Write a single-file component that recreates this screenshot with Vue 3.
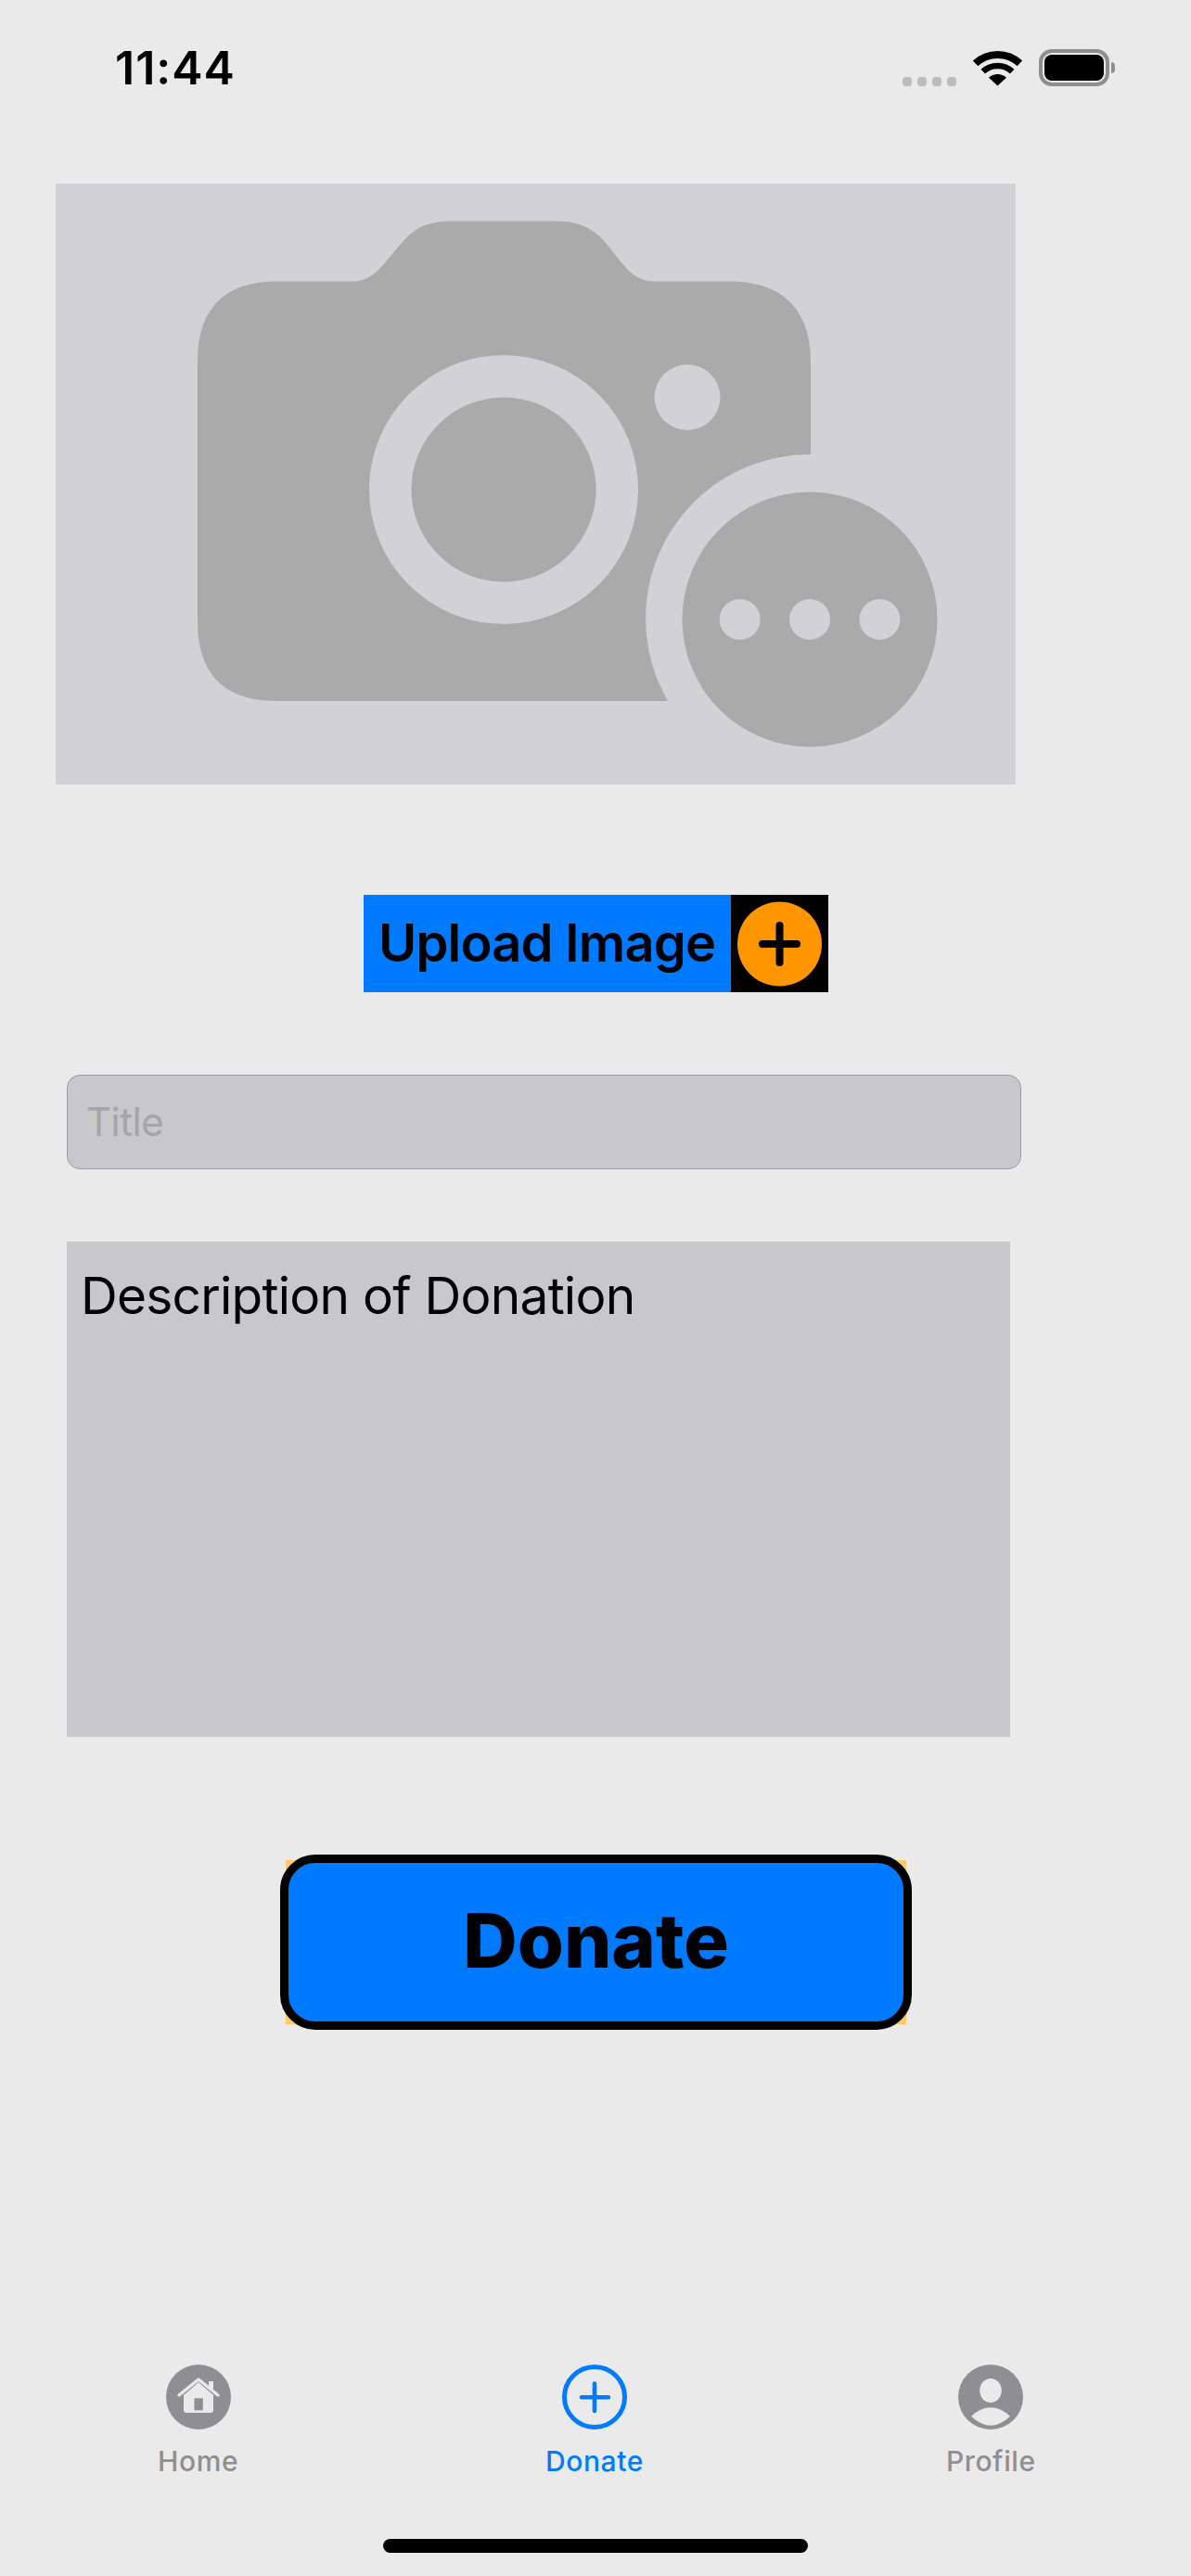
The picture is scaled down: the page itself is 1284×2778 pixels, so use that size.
<script setup>
const tabs = [
  { id: 'home', label: 'Home' },
  { id: 'donate', label: 'Donate', active: true },
  { id: 'profile', label: 'Profile' },
]
</script>

<template>
  <div class="page">
    <header class="status">
      <span class="time">11:44</span>
      <div class="status-icons">
        <div class="signal"><i></i><i></i><i></i><i></i></div>
        <svg class="wifi" viewBox="1048 52 54 40" width="54" height="40">
          <path d="M1051.6 67.4A35 35 0 0 1 1099.4 67.4" fill="none" stroke="#000" stroke-width="8" />
          <path d="M1059.8 76.2A23 23 0 0 1 1091.2 76.2" fill="none" stroke="#000" stroke-width="6.5" />
          <path d="M1075.5 91.5L1066 82.8A14 14 0 0 1 1085 82.8Z" fill="#000" />
        </svg>
        <div class="battery"><div class="battery-fill"></div></div>
        <div class="battery-nub"></div>
      </div>
    </header>

    <div class="photo">
      <svg viewBox="60 198 1035 648" width="1035" height="648">
        <path
          fill="#aaaaaa"
          d="M298 303.6H377C397 303.6 405 295 417 281L432 263C447 246 460 238.5 488 238.5H598C625 238.5 640 246 654 263L668 281C680 295 688 303.6 708 303.6H787C845 303.6 874 335 874 390V756H298C240 756 213 725 213 670V390C213 335 240 303.6 298 303.6Z"
        />
        <circle cx="873" cy="667" r="177" fill="#d1d1d6" />
        <circle cx="543" cy="528" r="145" fill="#d1d1d6" />
        <circle cx="543" cy="528" r="99.5" fill="#aaaaaa" />
        <circle cx="741" cy="428.5" r="35.5" fill="#d1d1d6" />
        <circle cx="873" cy="668" r="137.5" fill="#aaaaaa" />
        <circle cx="797.6" cy="668" r="22" fill="#d1d1d6" />
        <circle cx="873" cy="668" r="22" fill="#d1d1d6" />
        <circle cx="948.4" cy="668" r="22" fill="#d1d1d6" />
      </svg>
    </div>

    <div class="upload">
      <span class="upload-label">Upload Image</span>
      <div class="upload-icon">
        <svg viewBox="0 0 91 94" width="91" height="94">
          <circle cx="45.5" cy="47" r="45.5" fill="#ff9500" />
          <path d="M45.5 27V67M27 47H64" stroke="#000" stroke-width="8" stroke-linecap="round" />
        </svg>
      </div>
    </div>

    <div class="title-field">Title</div>
    <div class="description">Description of Donation</div>

    <div class="donate-wrap">
      <button class="donate" type="button">Donate</button>
    </div>

    <nav class="tabs">
      <div v-for="tab in tabs" :key="tab.id" class="tab" :class="{ active: tab.active }">
        <svg v-if="tab.id === 'home'" viewBox="0 0 70 70" width="70" height="70">
          <circle cx="35" cy="35" r="35" fill="#8e8e93" />
          <path d="M19 32H51V49Q51 52 48 52H22Q19 52 19 49Z" fill="#eaeaea" />
          <path d="M20 32L35 19L50 32Z" fill="#eaeaea" />
          <path d="M14 33L35 16L56 33" fill="none" stroke="#eaeaea" stroke-width="3.4" stroke-linecap="round" stroke-linejoin="round" />
          <path d="M46 18H51V28L46 24Z" fill="#eaeaea" />
          <rect x="30.5" y="36.3" width="9.3" height="13" fill="#8e8e93" />
        </svg>
        <svg v-else-if="tab.id === 'donate'" viewBox="0 0 70 70" width="70" height="70">
          <circle cx="35" cy="35" r="32.5" fill="none" stroke="#007aff" stroke-width="5" />
          <path d="M35 20.5V50M21 35.3H50" fill="none" stroke="#007aff" stroke-width="4.6" stroke-linecap="round" />
        </svg>
        <svg v-else viewBox="0 0 70 70" width="70" height="70">
          <circle cx="35" cy="35" r="35" fill="#8e8e93" />
          <ellipse cx="35" cy="28" rx="11.8" ry="13" fill="#eaeaea" />
          <path d="M14 55.7Q35 37 56 55.7Q35 75.7 14 55.7Z" fill="#eaeaea" />
        </svg>
        <span class="tab-label">{{ tab.label }}</span>
      </div>
    </nav>

    <div class="indicator-row"><div class="indicator"></div></div>
  </div>
</template>

<style>
html, body { margin: 0; background: #eaeaea; }
</style>

<style scoped>
.page {
  width: 1284px;
  height: 2778px;
  background: #eaeaea;
  display: flex;
  flex-direction: column;
  font-family: Inter, "Liberation Sans", sans-serif;
  overflow: hidden;
}
.status {
  height: 198px;
  flex: none;
  display: flex;
  justify-content: space-between;
  align-items: flex-start;
  box-sizing: border-box;
  padding: 43px 82px 0 124px;
}
.time {
  font-size: 50px;
  line-height: 60px;
  font-weight: 600;
  color: #000;
  letter-spacing: 1px;
}
.status-icons {
  display: flex;
  align-items: center;
  height: 40px;
  margin-top: 10px;
}
.signal {
  display: flex;
  gap: 6px;
  align-self: flex-end;
  margin-right: 17px;
}
.signal i {
  display: block;
  width: 10px;
  height: 10px;
  border-radius: 4px;
  background: #bdbdbd;
}
.wifi { display: block; margin-right: 18px; }
.battery {
  width: 76px;
  height: 40px;
  box-sizing: border-box;
  border: 4px solid #8e8e8e;
  border-radius: 14px;
  padding: 2px;
}
.battery-fill {
  height: 100%;
  background: #000;
  border-radius: 8px;
}
.battery-nub {
  width: 4px;
  height: 12px;
  margin-left: 2px;
  background: #8e8e8e;
  border-radius: 0 6px 6px 0;
}
.photo {
  flex: none;
  width: 1035px;
  height: 648px;
  margin-left: 60px;
  background: #d1d1d6;
}
.photo svg { display: block; }
.upload {
  flex: none;
  align-self: flex-start;
  display: flex;
  height: 105px;
  margin: 119px 0 0 392px;
}
.upload-label {
  width: 396px;
  box-sizing: border-box;
  padding-left: 16px;
  background: #007aff;
  color: #000;
  font-size: 56px;
  line-height: 105px;
  font-weight: 600;
  letter-spacing: -0.8px;
  white-space: nowrap;
}
.upload-icon {
  width: 105px;
  background: #000;
  display: flex;
  align-items: center;
  justify-content: center;
}
.upload-icon svg { display: block; }
.title-field {
  flex: none;
  width: 1029px;
  height: 102px;
  margin: 89px 0 0 72px;
  box-sizing: border-box;
  border: 1px solid #9c9ca1;
  border-radius: 14px;
  background: #c7c7cc;
  color: #a4a4a9;
  font-size: 42px;
  line-height: 100px;
  letter-spacing: -0.5px;
  padding-left: 20px;
}
.description {
  flex: none;
  width: 1017px;
  height: 534px;
  margin: 78px 0 0 72px;
  box-sizing: border-box;
  background: #c7c7cc;
  color: #000;
  font-size: 55px;
  line-height: 68px;
  letter-spacing: -0.75px;
  padding: 24px 0 0 15px;
}
.donate-wrap {
  position: relative;
  flex: none;
  align-self: flex-start;
  width: 681px;
  height: 189px;
  margin: 127px 0 0 302px;
}
.donate-wrap::before {
  content: "";
  position: absolute;
  inset: 6px;
  background: #ffc966;
}
.donate {
  position: relative;
  display: block;
  width: 100%;
  height: 100%;
  box-sizing: border-box;
  border: 9px solid #000;
  border-radius: 38px;
  background: #007aff;
  color: #000;
  font-family: inherit;
  font-size: 81px;
  font-weight: 800;
  padding: 0 0 3px;
}
.tabs {
  flex: none;
  display: grid;
  grid-template-columns: repeat(3, 1fr);
  width: 1282px;
  margin-top: auto;
}
.tab {
  display: flex;
  flex-direction: column;
  align-items: center;
  color: #8e8e93;
}
.tab svg { display: block; }
.tab.active { color: #007aff; }
.tab-label {
  margin-top: 16px;
  font-size: 30px;
  line-height: 36px;
  font-weight: 500;
  letter-spacing: 0.6px;
}
.indicator-row {
  flex: none;
  display: flex;
  justify-content: center;
  padding: 66px 0 25px;
}
.indicator {
  width: 458px;
  height: 15px;
  border-radius: 8px;
  background: #000;
}
</style>
